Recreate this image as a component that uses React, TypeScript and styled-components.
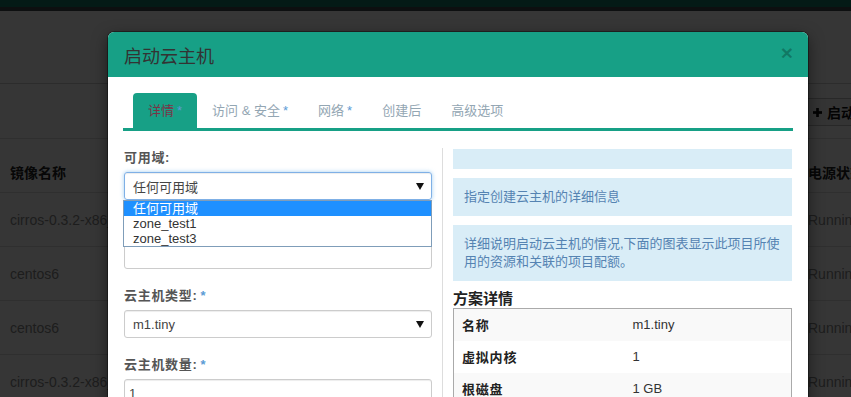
import React from 'react';
import styled, { createGlobalStyle } from 'styled-components';

const GlobalStyle = createGlobalStyle`
	html, body {
		margin: 0;
		padding: 0;
	}
	body {
		width: 851px;
		height: 397px;
		overflow: hidden;
		background: #fff;
		font-family: 'Liberation Sans', 'Noto Sans CJK SC', sans-serif;
		font-size: 14px;
		color: #333;
	}
	* {
		box-sizing: border-box;
	}
`;

const Page = styled.div`
	position: relative;
	width: 851px;
	height: 397px;
	overflow: hidden;
	background: #fff;
`;

const TopNav = styled.div`
	height: 7px;
	background: #137c69;
`;

const NavStripe = styled.div`
	height: 4px;
	background: #3e474c;
`;

const PageHeader = styled.div`
	height: 73px;
	border-bottom: 1px solid #d0d0d0;
`;

const Toolbar = styled.div`
	display: flex;
	padding: 14px 0 0 800px;
	height: 54px;
`;

const ActionButton = styled.button`
	display: flex;
	align-items: center;
	gap: 5px;
	height: 28px;
	padding: 0 12px;
	border: 1px solid #bbb;
	border-radius: 3px;
	background: #f4f4f4;
	font-family: inherit;
	font-size: 14px;
	font-weight: bold;
	color: #111;
	white-space: nowrap;
`;

const PlusIcon = styled.svg`
	width: 9px;
	height: 9px;
	flex: none;
`;

const InstanceTable = styled.div`
	display: flex;
	flex-direction: column;
	border-top: 1px solid #ddd;
`;

const InstanceRow = styled.div<{ $head?: boolean }>`
	display: grid;
	grid-template-columns: 798px 1fr;
	height: ${(p) => (p.$head ? '54px' : '54px')};
	align-items: ${(p) => (p.$head ? 'end' : 'center')};
	padding-bottom: ${(p) => (p.$head ? '10px' : '0')};
	border-bottom: 1px solid #ddd;
	font-weight: ${(p) => (p.$head ? 'bold' : 'normal')};
	color: ${(p) => (p.$head ? '#222' : '#8a8a8a')};
	white-space: nowrap;
`;

const InstanceCell = styled.div`
	padding-left: 10px;
	overflow: hidden;
`;

const Backdrop = styled.div`
	position: absolute;
	inset: 0;
	background: rgba(0, 0, 0, 0.79);
`;

const Modal = styled.div`
	position: absolute;
	top: 32px;
	left: 108px;
	width: 700px;
	height: 420px;
	background: #fff;
	border-radius: 6px;
	box-shadow: 0 0 0 1px rgba(0, 0, 0, 0.35), 0 5px 15px rgba(0, 0, 0, 0.5);
	overflow: hidden;
`;

const ModalHeader = styled.div`
	display: flex;
	align-items: center;
	justify-content: space-between;
	height: 45px;
	padding: 0 15px 0 16px;
	background: #17a086;
`;

const ModalTitle = styled.h4`
	margin: 0;
	font-size: 18px;
	font-weight: normal;
	color: #333;
`;

const CloseButton = styled.span`
	font-size: 21px;
	font-weight: bold;
	line-height: 1;
	color: rgba(0, 0, 0, 0.25);
	margin-top: -4px;
`;

const ModalBody = styled.div`
	padding: 16px 15px 0;
`;

const Tabs = styled.ul`
	display: flex;
	list-style: none;
	margin: 0;
	padding: 0 0 0 10px;
	border-bottom: 3px solid #17a086;
`;

const Tab = styled.li<{ $active?: boolean }>`
	height: 35px;
	line-height: 35px;
	padding: 0 15px;
	border-radius: 4px 4px 0 0;
	font-size: 13px;
	background: ${(p) => (p.$active ? '#17a086' : 'transparent')};
	color: ${(p) => (p.$active ? '#7a3446' : '#93a6b3')};
	white-space: nowrap;
`;

const Req = styled.span`
	margin-left: 3px;
	color: #5b9bd5;
`;

const TabPane = styled.div`
	display: grid;
	grid-template-columns: 320px 350px;
	margin-top: 17px;
`;

const FormColumn = styled.div`
	padding: 1px 10px 0 1px;
	border-right: 1px solid #ddd;
`;

const FormGroup = styled.div`
	position: relative;
	margin-bottom: 18px;
`;

const Label = styled.label`
	display: block;
	height: 18px;
	line-height: 18px;
	margin-bottom: 5px;
	font-size: 13px;
	font-weight: bold;
	letter-spacing: 0.7px;
	color: #555;
`;

const Field = styled.div<{ $focused?: boolean; $pad?: number }>`
	display: flex;
	align-items: center;
	justify-content: space-between;
	height: 28px;
	padding: 0 7px 0 ${(p) => p.$pad ?? 8}px;
	border: 1px solid ${(p) => (p.$focused ? '#7fb0e6' : '#ccc')};
	border-radius: 3px;
	font-size: 13px;
	color: #444;
	box-shadow: ${(p) =>
		p.$focused
			? 'inset 0 1px 1px rgba(0,0,0,.075), 0 0 4px rgba(102,175,233,.6)'
			: 'inset 0 1px 1px rgba(0,0,0,.075)'};
`;

const Caret = styled.span`
	width: 0;
	height: 0;
	border-left: 4px solid transparent;
	border-right: 4px solid transparent;
	border-top: 7px solid #111;
`;

const OptionList = styled.ul`
	position: absolute;
	top: 51px;
	left: -1px;
	width: 309px;
	margin: 0;
	padding: 0;
	list-style: none;
	background: #fff;
	border: 1px solid #7f9db9;
	z-index: 2;
`;

const Option = styled.li<{ $selected?: boolean }>`
	height: 15px;
	line-height: 15px;
	padding-left: 9px;
	font-size: 13px;
	background: ${(p) => (p.$selected ? '#1e90ff' : '#fff')};
	color: ${(p) => (p.$selected ? '#fff' : '#333')};
`;

const InfoColumn = styled.div`
	padding: 1px 1px 0 10px;
`;

const InfoBox = styled.div<{ $empty?: boolean }>`
	min-height: 20px;
	margin-bottom: 9px;
	padding: ${(p) => (p.$empty ? '0' : '10px 10px 10px 11px')};
	background: #d9edf7;
	font-size: 13px;
	line-height: 18px;
	color: #5583b2;
`;

const SectionTitle = styled.h4`
	margin: 0;
	height: 18px;
	line-height: 18px;
	font-size: 15px;
	font-weight: bold;
	color: #222;
`;

const DetailTable = styled.table`
	width: 100%;
	border-collapse: collapse;
	border: 1px solid #aaa;
`;

const DetailRow = styled.tr<{ $striped?: boolean }>`
	height: 32px;
	background: ${(p) => (p.$striped ? '#f9f9f9' : '#fff')};
`;

const DetailKey = styled.td`
	width: 171px;
	padding: 0 8px;
	font-size: 13px;
	font-weight: bold;
	letter-spacing: 0.8px;
	color: #222;
`;

const DetailValue = styled.td`
	padding: 0 8px;
	font-size: 13px;
	color: #333;
`;

const instances = [
	{ name: 'cirros-0.3.2-x86_64', power: 'Running' },
	{ name: 'centos6', power: 'Running' },
	{ name: 'centos6', power: 'Running' },
	{ name: 'cirros-0.3.2-x86_64', power: 'Running' },
];

const tabs = [
	{ label: '详情', required: true, active: true },
	{ label: '访问 & 安全', required: true },
	{ label: '网络', required: true },
	{ label: '创建后' },
	{ label: '高级选项' },
];

const flavor = [
	{ key: '名称', value: 'm1.tiny' },
	{ key: '虚拟内核', value: '1' },
	{ key: '根磁盘', value: '1 GB' },
	{ key: '临时磁盘', value: '0 GB' },
];

const App = () => {
	return (
		<Page>
			<GlobalStyle />
			<TopNav />
			<NavStripe />
			<PageHeader />
			<Toolbar>
				<ActionButton>
					<PlusIcon viewBox="0 0 10 10">
						<rect x="3.5" y="0" width="3" height="10" fill="#111" />
						<rect x="0" y="3.5" width="10" height="3" fill="#111" />
					</PlusIcon>
					启动云主机
				</ActionButton>
			</Toolbar>
			<InstanceTable>
				<InstanceRow $head>
					<InstanceCell>镜像名称</InstanceCell>
					<InstanceCell>电源状态</InstanceCell>
				</InstanceRow>
				{instances.map((row, i) => (
					<InstanceRow key={i}>
						<InstanceCell>{row.name}</InstanceCell>
						<InstanceCell>{row.power}</InstanceCell>
					</InstanceRow>
				))}
			</InstanceTable>
			<Backdrop />
			<Modal>
				<ModalHeader>
					<ModalTitle>启动云主机</ModalTitle>
					<CloseButton>×</CloseButton>
				</ModalHeader>
				<ModalBody>
					<Tabs>
						{tabs.map((t) => (
							<Tab key={t.label} $active={t.active}>
								{t.label}
								{t.required && <Req>*</Req>}
							</Tab>
						))}
					</Tabs>
					<TabPane>
						<FormColumn>
							<FormGroup>
								<Label>可用域:</Label>
								<Field $focused>
									任何可用域
									<Caret />
								</Field>
								<OptionList>
									<Option $selected>任何可用域</Option>
									<Option>zone_test1</Option>
									<Option>zone_test3</Option>
								</OptionList>
							</FormGroup>
							<FormGroup>
								<Label>
									云主机名称:<Req>*</Req>
								</Label>
								<Field />
							</FormGroup>
							<FormGroup>
								<Label>
									云主机类型:<Req>*</Req>
								</Label>
								<Field>
									m1.tiny
									<Caret />
								</Field>
							</FormGroup>
							<FormGroup>
								<Label>
									云主机数量:<Req>*</Req>
								</Label>
								<Field $pad={4}>1</Field>
							</FormGroup>
						</FormColumn>
						<InfoColumn>
							<InfoBox $empty />
							<InfoBox>指定创建云主机的详细信息</InfoBox>
							<InfoBox>
								详细说明启动云主机的情况,下面的图表显示此项目所使用的资源和关联的项目配额。
							</InfoBox>
							<SectionTitle>方案详情</SectionTitle>
							<DetailTable>
								<tbody>
									{flavor.map((f, i) => (
										<DetailRow key={f.key} $striped={i % 2 === 0}>
											<DetailKey>{f.key}</DetailKey>
											<DetailValue>{f.value}</DetailValue>
										</DetailRow>
									))}
								</tbody>
							</DetailTable>
						</InfoColumn>
					</TabPane>
				</ModalBody>
			</Modal>
		</Page>
	);
};

export default App;
